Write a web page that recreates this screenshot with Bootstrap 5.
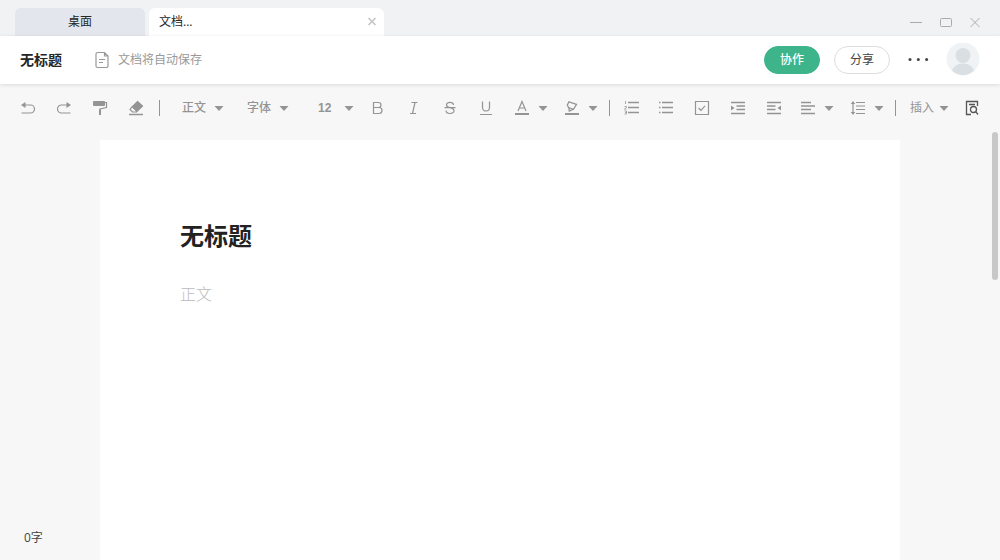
<!DOCTYPE html>
<html lang="zh-CN">
<head>
<meta charset="utf-8">
<meta name="viewport" content="width=device-width, initial-scale=1">
<title>无标题</title>
<link href="https://cdn.jsdelivr.net/npm/bootstrap@5.3.0/dist/css/bootstrap.min.css" rel="stylesheet">
<style>
  body { font: 12px/18px "Open Sans", "Noto Sans CJK SC", sans-serif; background: #f7f7f7; color: #262626; }
  button, select { font-family: inherit; }
  svg { display: block; flex: none; }
  .tab-strip { height: 36px; padding: 8px 20px 0 15px; background: #f0f2f4; gap: 4px; }
  .doc-tab { height: 28px; border: 0; border-radius: 6px 6px 0 0; font-size: 12px; line-height: 18px; color: #262626; }
  .tab-home { width: 130px; background: #e3e6ec; }
  .tab-open { width: 235px; background: #fff; padding: 0 7px 0 10px; }
  .plain { border: 0; background: none; padding: 0; color: inherit; display: flex; align-items: center; font-size: 12px; line-height: 18px; }
  .win { gap: 18px; color: #a9acaf; }
  .doc-head { height: 48px; padding: 0 20px; background: #fff; box-shadow: 0 1px 4px rgba(0,0,0,.12); z-index: 1; }
  .doc-name { font-size: 14px; line-height: 20px; }
  .saved { margin-left: 32px; gap: 8px; color: #999; }
  .head-actions { gap: 14px; }
  .pill { width: 56px; height: 28px; padding: 0; font-size: 12px; line-height: 18px; }
  .pill-main, .pill-main:hover { background: #3db48a; border-color: #3db48a; color: #fff; font-weight: 500; }
  .pill-line { border-color: #dcdee0; color: #444; background: #fff; }
  .tools { height: 48px; padding: 0 20px; color: #949494; }
  .g20 { gap: 20px; }
  .g16 { gap: 16px; }
  .g23 { gap: 23px; }
  .rule { width: 1px; height: 16px; background: #949494; flex: none; margin: 0 14px 0 11px; }
  .rule-first { margin: 0 22px 0 15px; }
  .lists { gap: 20px; margin: 0 18px; }
  .with-caret { width: 34px; justify-content: space-between; }
  .insert { width: 39px; justify-content: space-between; }
  .pick { appearance: none; border: 0; padding: 0; color: #949494; width: 42px; font-size: 12px; font-weight: 500; height: 20px; line-height: 20px;
    background: url("data:image/svg+xml,%3Csvg xmlns='http://www.w3.org/2000/svg' width='10' height='5'%3E%3Cpath d='M0.5 0h9L5 5z' fill='%23949494'/%3E%3C/svg%3E") no-repeat right center; }
  .pick-size { width: 36px; margin: 0 16px 0 6px; font-family: "Liberation Sans", sans-serif; font-weight: 700; }
  .sheet { max-width: 800px; margin: 8px auto 0; padding: 80px; background: #fff; width: 80%; min-height: 100%; }
  .sheet-title { font-size: 24px; line-height: 32px; font-weight: 700; color: #222; margin: 0 0 30px; outline: 0; }
  .sheet-text { border: 0; padding: 0; outline: 0; resize: none; font-size: 16px; line-height: 24px; height: 160px; font-weight: 300; }
  .sheet-text::placeholder { color: #bbb; opacity: 1; }
  .thumb { width: 6px; height: 148px; right: 2px; top: 0; border-radius: 3px; background: #c8c8c8; }
  .count { left: 24px; bottom: 13px; color: #444; }
</style>
</head>
<body class="vh-100 d-flex flex-column overflow-hidden">
<svg class="d-none">
  <symbol id="caret" viewBox="0 0 10 5"><path d="M.5 0h9L5 5z" fill="currentColor"/></symbol>
</svg>

<nav class="tab-strip d-flex" aria-label="标签页">
  <button class="doc-tab tab-home">桌面</button>
  <div class="doc-tab tab-open d-flex align-items-center justify-content-between">
    <span>文档...</span>
    <button class="plain" aria-label="关闭标签"><svg width="10" height="10" viewBox="0 0 10 10" stroke="#c4c6c8" stroke-width="1.700"><path d="M1.500 1l7 7M8.500 1l-7 7"/></svg></button>
  </div>
  <div class="win d-flex ms-auto align-items-center">
    <button class="plain" aria-label="最小化"><svg width="12" height="12" viewBox="0 0 12 12" stroke="currentColor"><path d="M0 6.500h12"/></svg></button>
    <button class="plain" aria-label="最大化"><svg width="12" height="12" viewBox="0 0 12 12" fill="none" stroke="currentColor"><rect x=".5" y="2.500" width="11" height="8" rx="1"/></svg></button>
    <button class="plain" aria-label="关闭"><svg width="10" height="12" viewBox="0 0 10 12" stroke="currentColor"><path d="M.5 2l9 9M9.500 2l-9 9"/></svg></button>
  </div>
</nav>

<header class="doc-head d-flex align-items-center position-relative">
  <strong class="doc-name">无标题</strong>
  <div class="saved d-flex align-items-center">
    <svg width="16" height="18" viewBox="0 0 16 18" fill="none" stroke="#999" stroke-width="1.200"><path d="M3.500 1.500h7l3.500 3.500v10a1.500 1.500 0 0 1-1.500 1.500h-9A1.500 1.500 0 0 1 2 15V3a1.500 1.500 0 0 1 1.500-1.500zM10.500 1.500v3.500h3.500M5 8.500h6M5 11.500h4"/></svg>
    <span>文档将自动保存</span>
  </div>
  <div class="head-actions ms-auto d-flex align-items-center">
    <button class="btn rounded-pill pill pill-main">协作</button>
    <button class="btn rounded-pill pill pill-line">分享</button>
    <div class="g16 d-flex align-items-center ps-1">
      <button class="plain" aria-label="更多"><svg width="22" height="16" viewBox="0 0 22 16" fill="#444"><circle cx="2" cy="7.500" r="1.500"/><circle cx="10.300" cy="7.500" r="1.500"/><circle cx="18.600" cy="7.500" r="1.500"/></svg></button>
      <button class="plain" aria-label="账户"><svg width="34" height="34" viewBox="0 0 34 34"><defs><clipPath id="face"><circle cx="17" cy="16" r="16"/></clipPath></defs><circle cx="17" cy="16" r="16.500" fill="#f0f3f5"/><g clip-path="url(#face)" fill="#d9dfe3"><circle cx="17" cy="12.500" r="7.500"/><ellipse cx="17" cy="29" rx="11" ry="8.500"/></g></svg></button>
    </div>
  </div>
</header>

<div class="tools d-flex align-items-center" role="toolbar" aria-label="格式">
  <div class="d-flex g20">
    <button class="plain" aria-label="撤销"><svg width="16" height="16" viewBox="0 0 16 16" fill="none" stroke="currentColor" stroke-width="1.200"><path d="M4 5h6.500a4 4 0 0 1 0 8H1.500"/><path d="M5.500 2v6L1 5z" fill="currentColor" stroke="none"/></svg></button>
    <button class="plain" aria-label="重做"><svg width="16" height="16" viewBox="0 0 16 16" fill="none" stroke="currentColor" stroke-width="1.200"><path d="M12 5H5.500a4 4 0 0 0 0 8H14.500"/><path d="M10.500 2v6L15 5z" fill="currentColor" stroke="none"/></svg></button>
    <button class="plain" aria-label="格式刷"><svg width="16" height="16" viewBox="0 0 16 16" fill="none" stroke="currentColor"><rect x="1" y="1" width="12" height="5" rx="1" fill="currentColor" stroke="none"/><path d="M13 2.500h1.500v5l-6.500 1.500v2" stroke-width="1.200"/><path d="M8 9.500v5.500" stroke-width="2"/></svg></button>
    <button class="plain" aria-label="清除格式"><svg width="16" height="16" viewBox="0 0 16 16" fill="none" stroke="currentColor" stroke-width="1.200"><path d="M9.500 1.500l5 4.500-6 6-5-4.500z" fill="currentColor"/><path d="M3.500 7.500L2 9.500l2.500 2.500h3l1-1-4-4z" fill="#f7f7f7"/><path d="M1 14.500h14" stroke-width="1.500"/></svg></button>
  </div>
  <span class="rule rule-first"></span>
  <div class="d-flex g23">
    <select class="pick" aria-label="段落样式"><option>正文</option><option>标题</option></select>
    <select class="pick" aria-label="字体"><option>字体</option></select>
    <select class="pick pick-size" aria-label="字号"><option>12</option><option>14</option></select>
  </div>
  <div class="d-flex g20">
    <button class="plain" aria-label="加粗"><svg width="16" height="16" viewBox="0 0 16 16" fill="none" stroke="currentColor" stroke-width="1.200"><path d="M3.500 2.500h5a2.500 2.500 0 0 1 0 5h-5zM3.500 7.500h5.500a3 3 0 0 1 0 6H3.500z"/></svg></button>
    <button class="plain" aria-label="斜体"><svg width="16" height="16" viewBox="0 0 16 16" fill="none" stroke="currentColor" stroke-width="1.200"><path d="M5.500 2.500h6M4 13.500h6M9 2.500l-2.500 11"/></svg></button>
    <button class="plain" aria-label="删除线"><svg width="16" height="16" viewBox="0 0 16 16" fill="none" stroke="currentColor" stroke-width="1.200"><path d="M11.500 5C11.300 1.500 4.500 1.500 4.500 5c0 1.500 1 2.200 3.500 2.700M2.500 7.700h11M8 7.700c2.800.6 4 1.300 4 3 0 3.800-8 3.800-8-.2"/></svg></button>
    <button class="plain" aria-label="下划线"><svg width="16" height="16" viewBox="0 0 16 16" fill="none" stroke="currentColor" stroke-width="1.200"><path d="M4.500 1.500v6a3.500 3.500 0 0 0 7 0v-6M2 14.500h12"/></svg></button>
    <div class="d-flex g16">
      <button class="plain with-caret" aria-label="文字颜色"><svg width="16" height="16" viewBox="0 0 16 16" fill="none" stroke="currentColor" stroke-width="1.200"><path d="M4 11L8 1.500 12 11M5.300 8h5.400"/><path d="M1 14h14" stroke-width="2"/></svg><svg width="10" height="5"><use href="#caret"/></svg></button>
      <button class="plain with-caret" aria-label="高亮颜色"><svg width="16" height="16" viewBox="0 0 16 16" fill="none" stroke="currentColor" stroke-width="1.300"><path d="M5 1.800l7.500 2.500-3 5-5-1.800L3.300 5zM4.700 7.500l.6 3.500 3.700-1.700"/><path d="M1 14h14" stroke-width="2"/></svg><svg width="10" height="5"><use href="#caret"/></svg></button>
    </div>
  </div>
  <span class="rule"></span>
  <button class="plain" aria-label="编号列表"><svg width="16" height="16" viewBox="0 0 16 16" fill="none" stroke="currentColor"><path d="M4 2.500h11M4 7.500h11M4 12.500h11" stroke-width="1.300"/><path d="M1.500 1v3M.5 6.500h2v1l-2 1.500h2M.5 11h2v3h-2M1 12.500h1.500" stroke-width=".8"/></svg></button>
  <div class="lists d-flex">
    <button class="plain" aria-label="项目列表"><svg width="16" height="16" viewBox="0 0 16 16" fill="none" stroke="currentColor" stroke-width="1.300"><path d="M4 2.500h11M4 7.500h11M4 12.500h11M1 2.500h1.500M1 7.500h1.500M1 12.500h1.500"/></svg></button>
    <button class="plain" aria-label="任务列表"><svg width="16" height="16" viewBox="0 0 16 16" fill="none" stroke="currentColor" stroke-width="1.200"><path d="M1.500 1.500h13v13h-13zM4.500 8L7 10.300l4-4.500"/></svg></button>
    <button class="plain" aria-label="增加缩进"><svg width="16" height="16" viewBox="0 0 16 16" fill="none" stroke="currentColor" stroke-width="1.300"><path d="M1 2.500h14M6.500 6h8.500M6.500 9.500h8.500M1 13.500h14"/><path d="M1 5.500v5L4.500 8z" fill="currentColor" stroke="none"/></svg></button>
    <button class="plain" aria-label="减少缩进"><svg width="16" height="16" viewBox="0 0 16 16" fill="none" stroke="currentColor" stroke-width="1.300"><path d="M1 2.500h14M1 6h8.500M1 9.500h8.500M1 13.500h14"/><path d="M15 5.500v5L11.500 8z" fill="currentColor" stroke="none"/></svg></button>
  </div>
  <div class="d-flex g16">
    <button class="plain with-caret" aria-label="对齐"><svg width="16" height="16" viewBox="0 0 16 16" stroke="currentColor" stroke-width="1.300"><path d="M1 2.500h10M1 6h14M1 9.500h10M1 13.500h14"/></svg><svg width="10" height="5"><use href="#caret"/></svg></button>
    <button class="plain with-caret" aria-label="行距"><svg width="16" height="16" viewBox="0 0 16 16" fill="none" stroke="currentColor" stroke-width="1.200"><path d="M6 2.500h9M6 6h9M6 9.500h9M6 13.500h9M3 3v10"/><path d="M3 1l2.200 3H.8zM3 15l2.200-3H.8z" fill="currentColor" stroke="none"/></svg><svg width="10" height="5"><use href="#caret"/></svg></button>
  </div>
  <span class="rule"></span>
  <button class="plain insert">插入<svg width="10" height="5"><use href="#caret"/></svg></button>
  <button class="plain ms-auto" aria-label="查找"><svg width="16" height="16" viewBox="0 0 16 16" fill="none" stroke="#555" stroke-width="1.300"><path d="M13.500 6V1.500h-11v13H7M5 4.500h6"/><circle cx="9.500" cy="9.500" r="3"/><path d="M11.700 11.700l2.300 2.800"/></svg></button>
</div>

<main class="flex-grow-1 position-relative overflow-hidden">
  <article class="sheet">
    <h1 class="sheet-title" contenteditable="true">无标题</h1>
    <textarea class="sheet-text w-100" aria-label="正文" placeholder="正文"></textarea>
  </article>
  <div class="thumb position-absolute"></div>
  <div class="count position-absolute">0字</div>
</main>
<script src="https://cdn.jsdelivr.net/npm/bootstrap@5.3.0/dist/js/bootstrap.bundle.min.js"></script>
</body>
</html>
